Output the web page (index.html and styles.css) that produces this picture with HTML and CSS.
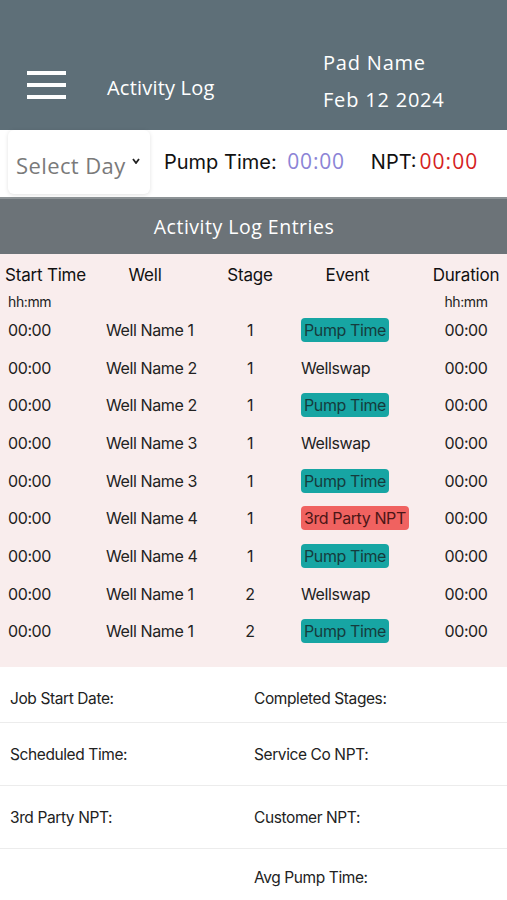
FILE: index.html
```html
<!DOCTYPE html>
<html>
<head>
<meta charset="utf-8">
<link rel="stylesheet" href="styles.css">
</head>
<body>
<div class="app">
  <header class="topbar">
    <div class="menu"><span></span><span></span><span></span></div>
    <div class="title">Activity Log</div>
    <div class="pad">
      <div>Pad Name</div>
      <div>Feb 12 2024</div>
    </div>
  </header>
  <div class="filter">
    <div class="select">Select Day <svg class="chev" width="8" height="6" viewBox="0 0 8 6"><path d="M1 1 L4 5 L7 1" fill="none" stroke="#222" stroke-width="1.8"/></svg></div>
    <div class="stat">Pump Time: <span class="purple">00:00</span></div>
    <div class="stat npt">NPT:<span class="red">00:00</span></div>
  </div>
  <div class="section">Activity Log Entries</div>
  <div class="log">
    <div class="row head">
      <div class="c1">Start Time</div><div class="c2h">Well</div><div class="c3">Stage</div><div class="c4h">Event</div><div class="c5">Duration</div>
    </div>
    <div class="row units">
      <div class="c1">hh:mm</div><div></div><div></div><div></div><div class="c5">hh:mm</div>
    </div>
    <div class="row"><div class="c1">00:00</div><div class="c2">Well Name 1</div><div class="c3">1</div><div class="c4"><span class="badge teal">Pump Time</span></div><div class="c5">00:00</div></div>
    <div class="row"><div class="c1">00:00</div><div class="c2">Well Name 2</div><div class="c3">1</div><div class="c4">Wellswap</div><div class="c5">00:00</div></div>
    <div class="row"><div class="c1">00:00</div><div class="c2">Well Name 2</div><div class="c3">1</div><div class="c4"><span class="badge teal">Pump Time</span></div><div class="c5">00:00</div></div>
    <div class="row"><div class="c1">00:00</div><div class="c2">Well Name 3</div><div class="c3">1</div><div class="c4">Wellswap</div><div class="c5">00:00</div></div>
    <div class="row"><div class="c1">00:00</div><div class="c2">Well Name 3</div><div class="c3">1</div><div class="c4"><span class="badge teal">Pump Time</span></div><div class="c5">00:00</div></div>
    <div class="row"><div class="c1">00:00</div><div class="c2">Well Name 4</div><div class="c3">1</div><div class="c4"><span class="badge red-b">3rd Party NPT</span></div><div class="c5">00:00</div></div>
    <div class="row"><div class="c1">00:00</div><div class="c2">Well Name 4</div><div class="c3">1</div><div class="c4"><span class="badge teal">Pump Time</span></div><div class="c5">00:00</div></div>
    <div class="row"><div class="c1">00:00</div><div class="c2">Well Name 1</div><div class="c3">2</div><div class="c4">Wellswap</div><div class="c5">00:00</div></div>
    <div class="row"><div class="c1">00:00</div><div class="c2">Well Name 1</div><div class="c3">2</div><div class="c4"><span class="badge teal">Pump Time</span></div><div class="c5">00:00</div></div>
  </div>
  <div class="summary">
    <div class="srow"><div class="sl">Job Start Date:</div><div class="sr">Completed Stages:</div></div>
    <div class="srow"><div class="sl">Scheduled Time:</div><div class="sr">Service Co NPT:</div></div>
    <div class="srow"><div class="sl">3rd Party NPT:</div><div class="sr">Customer NPT:</div></div>
    <div class="srow last"><div class="sl"></div><div class="sr">Avg Pump Time:</div></div>
  </div>
</div>
</body>
</html>
```
FILE: styles.css
```css
* { box-sizing: border-box; }
html, body { margin: 0; padding: 0; }
body { width: 507px; height: 900px; overflow: hidden; background: #fff; font-family: Inter, "Liberation Sans", sans-serif; color: #1d1d1d; }
.app { display: flex; flex-direction: column; }

.topbar { height: 130px; background: #5e6f78; display: flex; align-items: flex-start; color: #fff; font-family: "Open Sans", "DejaVu Sans", sans-serif; }
.menu { margin: 71px 0 0 27px; width: 39px; display: flex; flex-direction: column; gap: 8px; }
.menu span { display: block; height: 4px; background: #fff; }
.title { margin: 74px 0 0 41px; font-size: 20px; line-height: 28px; letter-spacing: 0.2px; }
.pad { margin: 44px 0 0 auto; width: 184px; font-size: 20px; line-height: 37px; letter-spacing: 0.8px; }

.filter { height: 69px; display: flex; align-items: center; border-bottom: 2px solid #8d9396; }
.select { margin: -4px 0 0 8px; width: 142px; height: 64px; background: #fff; border-radius: 6px; box-shadow: 0 1px 4px rgba(0,0,0,0.12); display: flex; align-items: center; padding: 6px 0 0 8px; font-family: "Open Sans", "DejaVu Sans", sans-serif; font-size: 22px; letter-spacing: 0.4px; color: #7a7a7a; white-space: nowrap; }
.chev { margin: -8px 0 0 6px; }
.stat { margin: -6px 0 0 14px; font-size: 20px; color: #111; font-family: Inter, "Liberation Sans", sans-serif; white-space: nowrap; }
.stat.npt { margin-left: 26px; }
.purple { color: #8b84d6; font-family: "Open Sans", sans-serif; font-size: 21px; letter-spacing: 0.8px; margin-left: 5px; }
.red { color: #d51f1f; font-family: "Open Sans", sans-serif; font-size: 21px; letter-spacing: 1px; margin-left: 3px; }

.section { height: 55px; background: #6c7378; color: #fff; display: flex; align-items: center; justify-content: center; padding-right: 19px; font-family: "Open Sans", "DejaVu Sans", sans-serif; font-size: 19.5px; letter-spacing: 0.5px; }

.log { background: #f9eded; padding-bottom: 17px; }
.row { display: grid; grid-template-columns: 100px 100px 100px 125px 82px; height: 37.7px; align-items: center; font-size: 16px; letter-spacing: -0.4px; color: #222; white-space: nowrap; }
.row.head { height: 40px; padding-top: 1px; font-size: 17px; letter-spacing: -0.2px; color: #111; }
.row.units { height: 17px; font-size: 14px; align-items: center; }
.row.head + .row.units { margin-top: -1px; }
.units + .row { margin-top: 1px; }
.c1 { padding-left: 8px; }
.head .c1 { padding-left: 5px; }
.c2 { padding-left: 6px; }
.c2h { text-align: center; padding-right: 10px; }
.c3 { text-align: center; }
.c4 { padding-left: 1px; }
.c4h { text-align: center; padding-right: 30px; }
.c5 { text-align: center; }
.badge { display: inline-block; padding: 1px 3px; border-radius: 4px; line-height: 22px; }
.teal { background: #17a5a3; color: #153c3d; }
.red-b { background: #f06260; color: #4b1616; }

.summary { display: flex; flex-direction: column; font-family: Inter, "Liberation Sans", sans-serif; font-size: 15.5px; color: #222; letter-spacing: -0.4px; }
.srow { display: grid; grid-template-columns: 244px 1fr; height: 63px; align-items: center; border-bottom: 1px solid #ececec; padding-top: 0; }
.srow:first-child { height: 56px; padding-top: 8px; }
.srow.last { border-bottom: none; height: 54px; padding-top: 2px; }
.sl { padding-left: 10px; }
.sr { padding-left: 10px; }
```
